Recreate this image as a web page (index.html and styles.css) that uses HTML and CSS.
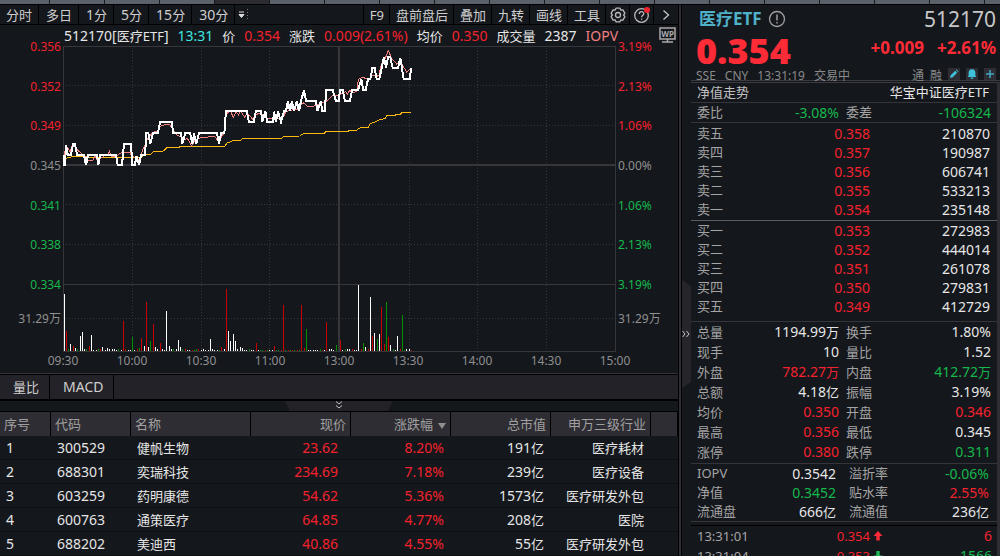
FILE: index.html
```html
<!DOCTYPE html>
<html lang="zh-CN">
<head>
<meta charset="utf-8">
<title>医疗ETF 512170</title>
<link rel="stylesheet" href="styles.css">
</head>
<body>
<div class="top-strip"></div>
<div class="workspace">
  <main class="main">
    <nav class="toolbar">
      <div class="group periods">
        <button>分时</button><button>多日</button><button><b>1</b>分</button><button><b>5</b>分</button><button><b>15</b>分</button><button><b>30</b>分</button>
        <button class="more" aria-label="更多周期"><svg width="12" height="14" viewBox="0 0 12 14"><path d="M1 4h5M1 6.500h5L3.500 9.500z" stroke="#ddd" fill="#ddd"/><path d="M9.500 1v12" stroke="#77777c" stroke-dasharray="1 2"/></svg></button>
      </div>
      <div class="group tools">
        <button>F9</button><button>盘前盘后</button><button>叠加</button><button>九转</button><button>画线</button><button>工具</button>
        <button class="icon" aria-label="设置"><svg width="16" height="16" viewBox="0 0 16 16" fill="none" stroke="#b9b9bb" stroke-width="1.300"><path d="M6 1.200h4l.8 1.900 2.100-.2 2 3.500-1.300 1.600 1.300 1.600-2 3.500-2.100-.2-.8 1.900H6l-.8-1.900-2.100.2-2-3.500L2.400 8 1.100 6.400l2-3.500 2.100.2z" stroke-linejoin="round"/><circle cx="8" cy="8" r="2.500"/></svg></button>
        <button class="icon" aria-label="帮助"><svg width="18" height="18" viewBox="0 0 18 18" fill="none" stroke="#b9b9bb" stroke-width="1.300"><circle cx="8.500" cy="9.500" r="6.800"/><path d="M6.300 8c0-3 4.500-3 4.500-.3 0 1.700-2.200 1.600-2.200 3.600M8.600 12.500v1.300"/><circle cx="14" cy="4" r="3" fill="#f5222d" stroke="none"/></svg></button>
        <button class="icon" aria-label="展开"><svg width="12" height="14" viewBox="0 0 12 14" fill="none" stroke="#c4c4c6" stroke-width="1.300"><path d="M3.500 2.500L8.500 7l-5 4.500"/></svg></button>
      </div>
    </nav>

    <section class="chart">
      <div class="readout">
        <span>512170[<small>医疗</small><small>ETF</small>]</span>
        <span class="cyan">13:31</span>
        <small>价</small><span class="up">0.354</span>
        <small>涨跌</small><span class="up">0.009(2.61%)</span>
        <small>均价</small><span class="up">0.350</span>
        <small>成交量</small><span>2387</span>
        <span class="pink">IOPV</span>
        <svg class="wp" width="17" height="17" viewBox="0 0 17 17" fill="none" stroke="#a9a9ab"><rect x="1" y="1" width="15" height="11" stroke-width="1.500"/><path d="M8.500 12v3M3 15h11" stroke-width="1.500"/><text x="8.500" y="9.500" text-anchor="middle" class="wp-text">WP</text></svg>
      </div>
      <div class="plot-row">
        <div class="axis left">
          <div class="scale"><span class="up">0.356</span><span class="up">0.352</span><span class="up">0.349</span><span>0.345</span><span class="down">0.341</span><span class="down">0.338</span><span class="down">0.334</span></div>
          <span class="vol">31.29万</span>
        </div>
        <svg class="plot" viewBox="189 138 1659 918" preserveAspectRatio="none" fill="none">
          <g class="grid dotted"><path d="M198 256.500H1845M198 376.500H1845M198 613.500H1845M198 733.500H1845M198 955.500H1845"/><path d="M397.500 144V1053M604.500 144V1053M808.500 144V1053M1228.500 144V1053M1432.500 144V1053M1639.500 144V1053"/></g>
          <g class="grid"><path d="M190.500 1056V139.500H1846.500V1054.500H190.500M189 853.500H1848"/><path d="M189 495H1848M1017 138V1056" stroke-width="6"/></g>
          <g class="bars" transform="translate(.5 570)">
            <path class="w" d="M193 483V312M211 483V462M226 483V474M241 483V438M247 483V426M253 483V477M274 483V435M280 483V480M289 483V480M307 483V471M316 483V480M322 483V474M328 483V477M337 483V477M343 483V477M349 483V480M364 483V480M385 483V480M391 483V480M403 483V480M433 483V468M445 483V471M466 483V471M472 483V477M487 483V477M493 483V480M499 483V363M508 483V468M514 483V477M529 483V477M535 483V450M541 483V471M562 483V480M568 483V480M604 483V480M610 483V477M616 483V480M625 483V480M631 483V447M637 483V477M643 483V480M652 483V480M673 483V477M685 483V423M691 483V453M700 483V432M706 483V453M712 483V477M721 483V471M727 483V474M733 483V480M739 483V480M754 483V480M760 483V480M775 483V480M808 483V480M817 483V480M925 483V480M931 483V480M940 483V480M946 483V480M952 483V480M973 483V480M988 483V477M994 483V477M1000 483V480M1027 483V480M1042 483V477M1048 483V477M1063 483V480M1069 483V480M1075 483V285M1096 483V471M1111 483V321M1123 483V429M1138 483V432M1171 483V465M1186 483V480M1192 483V438M1219 483V477M1228 483V477"/>
            <path class="r" d="M199 483V423M220 483V468M268 483V468M301 483V477M370 483V393M376 483V477M412 483V477M424 483V444M439 483V336M460 483V402M481 483V459M556 483V477M577 483V480M595 483V477M664 483V471M679 483V297M769 483V459M796 483V480M823 483V468M844 483V480M850 483V345M865 483V480M877 483V480M892 483V480M904 483V345M913 483V474M967 483V480M979 483V396M1021 483V450M1057 483V477M1084 483V477M1105 483V477M1117 483V438M1144 483V351M1153 483V462M1165 483V441M1201 483V477M1234 483V480"/>
            <path class="g" d="M205 483V477M232 483V477M259 483V477M295 483V477M355 483V477M397 483V441M418 483V474M451 483V453M520 483V477M547 483V477M583 483V480M589 483V477M658 483V480M748 483V477M781 483V480M787 483V480M802 483V480M829 483V480M835 483V480M856 483V480M871 483V480M883 483V480M898 483V480M919 483V417M961 483V477M1009 483V465M1036 483V477M1090 483V459M1132 483V447M1159 483V336M1180 483V477M1207 483V375M1213 483V480"/>
          </g>
          <polyline class="avg" points="189,474 201,474 216,470 261,470 262,472 423,472 435,465 453,463 460,454 490,453 500,444 537,442 540,439 675,439 681,429 700,422 723,420 727,415 846,415 850,409 900,408 904,403 918,400 972,400 978,394 1045,394 1047,391 1070,391 1075,386 1087,382 1106,382 1110,371 1126,366 1142,358 1155,356 1160,346 1185,346 1190,342 1202,342 1206,337 1233,337"/>
          <polyline class="iopv" points="192,470 198,435 210,455 219,429 232,450 240,456 252,468 258,472 262,482 280,480 285,468 291,480 310,470 315,462 325,465 328,453 333,468 345,470 350,468 360,460 372,456 390,456 395,470 408,472 417,480 423,470 427,450 436,435 443,415 451,405 462,396 474,392 482,378 500,372 510,375 520,390 530,405 543,410 550,420 562,415 575,438 585,420 597,415 605,411 620,413 628,408 645,410 655,425 663,415 668,405 674,395 678,345 690,330 700,352 708,335 716,345 722,333 734,352 742,340 758,357 765,348 775,340 790,345 800,355 830,357 850,350 858,335 875,330 893,328 905,312 912,308 920,318 935,320 950,315 965,310 980,303 1000,285 1016,287 1030,278 1038,275 1042,282 1050,270 1056,278 1070,275 1075,238 1088,232 1105,238 1120,225 1130,230 1137,225 1145,190 1156,175 1165,152 1175,175 1190,192 1202,185 1210,200 1220,216 1233,205"/>
          <polyline class="price" points="189,465 192,495 195,495 198,435 204,465 213,465 219,432 225,432 231,465 252,465 258,495 264,465 291,465 295,495 300,465 348,465 353,495 366,495 372,432 393,432 397,495 405,495 409,468 417,495 423,465 435,465 439,399 445,399 451,432 459,399 474,399 480,366 516,366 519,399 543,399 547,432 556,399 570,399 577,432 582,401 589,432 597,399 651,399 657,432 663,399 673,399 678,333 740,333 747,366 761,366 768,333 783,333 787,366 796,335 802,366 819,366 822,335 828,366 834,335 843,366 852,333 858,333 864,303 870,333 876,303 882,333 891,303 897,333 903,303 912,270 918,303 948,303 952,333 963,303 966,333 975,333 978,270 998,270 1008,303 1016,303 1020,271 1028,271 1035,303 1050,303 1056,270 1074,270 1084,238 1090,270 1097,270 1104,238 1111,238 1117,204 1124,204 1130,237 1138,237 1152,172 1158,204 1164,172 1171,172 1178,204 1194,204 1201,174 1211,237 1229,237 1234,204"/>
        </svg>
        <div class="axis right">
          <div class="scale"><span class="up">3.19%</span><span class="up">2.13%</span><span class="up">1.06%</span><span>0.00%</span><span class="down">1.06%</span><span class="down">2.13%</span><span class="down">3.19%</span></div>
          <span class="vol">31.29万</span>
        </div>
      </div>
      <div class="times"><span>09:30</span><span>10:00</span><span>10:30</span><span>11:00</span><span>13:00</span><span>13:30</span><span>14:00</span><span>14:30</span><span>15:00</span></div>
    </section>

    <div class="indicator-tabs"><button>量比</button><button class="latin">MACD</button></div>
    <div class="fold"><button aria-label="收起"><svg width="8" height="8" viewBox="0 0 8 8" fill="none" stroke="#c4c4c6"><path d="M1 .5l3 2.500 3-2.500M1 4.500L4 7l3-2.500"/></svg></button></div>

    <table class="stocks">
      <colgroup><col class="c-no"><col class="c-code"><col class="c-name"><col class="c-num"><col class="c-num"><col class="c-num"><col class="c-num"><col></colgroup>
      <thead><tr><th>序号</th><th>代码</th><th>名称</th><th class="num">现价</th><th class="num sorted">涨跌幅<i class="caret"></i></th><th class="num">总市值</th><th class="num">申万三级行业</th><th></th></tr></thead>
      <tbody>
        <tr><td>1</td><td>300529</td><td><small>健帆生物</small></td><td class="num price-cell up">23.62</td><td class="num up">8.20%</td><td class="num">191<small>亿</small></td><td class="num"><small>医疗耗材</small></td><td></td></tr>
        <tr><td>2</td><td>688301</td><td><small>奕瑞科技</small></td><td class="num price-cell up">234.69</td><td class="num up">7.18%</td><td class="num">239<small>亿</small></td><td class="num"><small>医疗设备</small></td><td></td></tr>
        <tr><td>3</td><td>603259</td><td><small>药明康德</small></td><td class="num price-cell up">54.62</td><td class="num up">5.36%</td><td class="num">1573<small>亿</small></td><td class="num"><small>医疗研发外包</small></td><td></td></tr>
        <tr><td>4</td><td>600763</td><td><small>通策医疗</small></td><td class="num price-cell up">64.85</td><td class="num up">4.77%</td><td class="num">208<small>亿</small></td><td class="num"><small>医院</small></td><td></td></tr>
        <tr><td>5</td><td>688202</td><td><small>美迪西</small></td><td class="num price-cell up">40.86</td><td class="num up">4.55%</td><td class="num">55<small>亿</small></td><td class="num"><small>医疗研发外包</small></td><td></td></tr>
      </tbody>
    </table>
  </main>

  <aside class="side">
    <div class="side-rail"><button aria-label="收起侧栏"><svg width="8" height="8" viewBox="0 0 8 8" fill="none" stroke="#c4c4c6"><path d="M.5 1L3 4 .5 7M4.500 1L7 4 4.500 7"/></svg></button></div>
    <div class="quote">
      <header class="head">
        <div class="title"><h1>医疗ETF</h1>
          <svg width="18" height="18" viewBox="0 0 18 18" fill="none" stroke="#a0a0a2" stroke-width="1.300"><circle cx="9" cy="9" r="7.500"/><path d="M9 4.500v6M9 12v1.500" stroke-width="1.500"/></svg>
          <span class="code">512170</span></div>
        <div class="last"><strong>0.354</strong><span>+0.009</span><span>+2.61%</span></div>
        <div class="meta"><span>SSE</span><span>CNY</span><span>13:31:19</span><span>交易中</span>
          <div class="badges"><span>通</span><span>融</span>
            <button aria-label="编辑"><svg width="12" height="12" viewBox="0 0 12 12" fill="#3fc1dc"><path d="M2 10l.7-2.700L7.200 2.800l2 2L4.700 9.300zM7.900 2.100l.7-.7 2 2-.7.7z"/></svg></button>
            <button aria-label="提醒"><svg width="12" height="12" viewBox="0 0 12 12" fill="#3fc1dc"><path d="M6 1.200c2.300 0 3.400 1.600 3.400 3.500v2.800l1 1.500H1.600l1-1.500V4.700C2.600 2.800 3.700 1.200 6 1.200zM4.700 9.500h2.600v1.300H4.700z"/></svg></button>
            <button aria-label="添加"><svg width="12" height="12" viewBox="0 0 12 12" stroke="#3fa9c4" stroke-width="1.500"><path d="M6 2v8M2 6h8"/></svg></button>
          </div></div>
      </header>
      <div class="details">
        <div class="line nav"><small>净值走势</small><small class="white">华宝中证医疗ETF</small></div>
        <dl class="stats line"><dt>委比</dt><dd class="down">-3.08%</dd><dt>委差</dt><dd class="down">-106324</dd></dl>
        <table class="depth asks">
          <tr><th>卖五</th><td class="up">0.358</td><td>210870</td></tr>
          <tr><th>卖四</th><td class="up">0.357</td><td>190987</td></tr>
          <tr><th>卖三</th><td class="up">0.356</td><td>606741</td></tr>
          <tr><th>卖二</th><td class="up">0.355</td><td>533213</td></tr>
          <tr><th>卖一</th><td class="up">0.354</td><td>235148</td></tr>
        </table>
        <table class="depth bids">
          <tr><th>买一</th><td class="up">0.353</td><td>272983</td></tr>
          <tr><th>买二</th><td class="up">0.352</td><td>444014</td></tr>
          <tr><th>买三</th><td class="up">0.351</td><td>261078</td></tr>
          <tr><th>买四</th><td class="up">0.350</td><td>279831</td></tr>
          <tr><th>买五</th><td class="up">0.349</td><td>412729</td></tr>
        </table>
        <dl class="stats totals">
          <dt>总量</dt><dd>1194.99<small>万</small></dd><dt>换手</dt><dd>1.80%</dd>
          <dt>现手</dt><dd>10</dd><dt>量比</dt><dd>1.52</dd>
          <dt>外盘</dt><dd class="up">782.27<small>万</small></dd><dt>内盘</dt><dd class="down">412.72<small>万</small></dd>
          <dt>总额</dt><dd>4.18<small>亿</small></dd><dt>振幅</dt><dd>3.19%</dd>
          <dt>均价</dt><dd class="up">0.350</dd><dt>开盘</dt><dd class="up">0.346</dd>
          <dt>最高</dt><dd class="up">0.356</dd><dt>最低</dt><dd>0.345</dd>
          <dt>涨停</dt><dd class="up">0.380</dd><dt>跌停</dt><dd class="down">0.311</dd>
        </dl>
        <dl class="stats fund">
          <dt>IOPV</dt><dd>0.3542</dd><dt>溢折率</dt><dd class="down">-0.06%</dd>
          <dt>净值</dt><dd class="down">0.3452</dd><dt>贴水率</dt><dd class="up">2.55%</dd>
          <dt>流通盘</dt><dd>666<small>亿</small></dd><dt>流通值</dt><dd>236<small>亿</small></dd>
        </dl>
        <table class="ticks">
          <tr><th>13:31:01</th><td class="up">0.354</td><td class="arrow"><svg width="10" height="10" viewBox="0 0 10 10" fill="#ff2b36"><path d="M5 0l4.500 5H6.700v4.500H3.300V5H.5z"/></svg></td><td class="up">6</td></tr>
          <tr><th>13:31:04</th><td class="up">0.353</td><td class="arrow"><svg width="10" height="10" viewBox="0 0 10 10" fill="#1db954"><path d="M5 9.500L.5 4.500h2.800V0h3.400v4.500h2.800z"/></svg></td><td class="down">1566</td></tr>
        </table>
      </div>
    </div>
  </aside>
</div>
</body>
</html>
```
FILE: styles.css
```css
* { box-sizing: border-box; }

body {
  margin: 0;
  height: 100vh;
  overflow: hidden;
  display: flex;
  flex-direction: column;
  background: #14171c;
  color: #e6e6e6;
  font: 14px/18px "Noto Sans", "Noto Sans CJK SC", sans-serif;
}

small { font-size: 13px; }
button { border: 0; margin: 0; padding: 0; background: none; color: inherit; font: inherit; }
svg { display: block; flex: none; }
dl, dd, h1 { margin: 0; }
table { border-collapse: separate; border-spacing: 0; width: 100%; }
th { font-weight: normal; text-align: left; }

.up { color: #f5222d; }
.down { color: #16b84c; }
.cyan { color: #3fe6e0; }
.pink { color: #f08080; }
.white { color: #e6e6e6; }

.top-strip {
  flex: none;
  height: 5px;
  border-bottom: 1px solid #000;
  background:
    linear-gradient(#2b2b31, #2b2b31) 215px 0 / 54px 4px no-repeat,
    repeating-linear-gradient(90deg, #5a616b 0 54px, #17191d 54px 55px) -5px 0;
}

.workspace { flex: 1; min-height: 0; display: flex; overflow: hidden; }
.main {
  flex: 1;
  min-width: 0;
  border-right: 1px solid #000;
  overflow: hidden;
}

/* toolbar */
.toolbar {
  display: flex;
  justify-content: space-between;
  height: 20px;
  border-bottom: 1px solid #000;
}
.group { display: flex; }
.group button {
  display: flex;
  align-items: center;
  justify-content: center;
  padding: 0 5px 0 6px;
  border-right: 1px solid #000;
  font-size: 13px;
  line-height: 18px;
  color: #cfcfcf;
  white-space: nowrap;
}
.group b { font-weight: normal; font-size: 14px; }
.periods button { padding: 0 6px 0 7px; }
.periods button:first-child { padding-left: 6px; }
.periods .more { padding: 0 3px; border-right: 0; }
.tools button:first-child { border-left: 1px solid #000; }
.tools .icon { width: 24px; padding: 0; }
.tools .icon:last-child { border-right: 0; }

/* intraday chart */
.chart { border-bottom: 1px solid #34343a; }
.readout {
  display: flex;
  gap: 9px;
  height: 21px;
  padding: 2px 2px 0 64px;
  white-space: nowrap;
}
.wp { margin-left: auto; }
.wp-text { font: bold 8px "Noto Sans", sans-serif; fill: #a9a9ab; stroke: none; }

.plot-row { display: flex; }
.axis {
  flex: none;
  width: 63px;
  margin-top: -8px;
  font-size: 12px;
  color: #8f8f8f;
}
.axis.left { padding-right: 2px; text-align: right; }
.axis.right { width: 62px; padding-left: 2px; }
.scale {
  display: flex;
  flex-direction: column;
  justify-content: space-between;
  height: 256px;
}
.vol { display: block; margin-top: 16px; }
.plot { flex: 1; min-width: 0; height: 306px; shape-rendering: crispEdges; }
.grid { stroke: #36363b; stroke-width: 3; }
.dotted { stroke-dasharray: 3 6; }
.bars { stroke-width: 3; }
.w { stroke: #fff; }
.r { stroke: #c80000; }
.g { stroke: #009000; }
.avg { stroke: #fdb913; stroke-width: 3; }
.iopv { stroke: #f08080; stroke-width: 3; }
.price { stroke: #fff; stroke-width: 6; }
.times {
  display: flex;
  justify-content: space-between;
  height: 21px;
  padding: 0 45px 0 45px;
  font-size: 12px;
  color: #8f8f8f;
}
.times span { width: 36px; text-align: center; }

.indicator-tabs {
  display: flex;
  height: 27px;
  border-top: 1px solid #000;
  border-bottom: 2px solid #000;
  background: #232228;
}
.indicator-tabs button {
  padding: 0 10px 0 13px;
  border-right: 1px solid #000;
  font-size: 13px;
  color: #cfcfcf;
}
.indicator-tabs .latin { font-size: 14px; }

.fold {
  display: flex;
  justify-content: center;
  height: 11px;
  border-bottom: 1px solid #000;
}
.fold button {
  display: flex;
  justify-content: center;
  width: 108px;
  background: #232228;
  clip-path: polygon(0 0, 100% 0, 103px 100%, 5px 100%);
}

/* constituents */
.stocks { table-layout: fixed; }
.c-no { width: 51px; }
.c-code { width: 80px; }
.c-name { width: 120px; }
.c-num { width: 100px; }
.stocks th {
  height: 24px;
  padding: 0 4px;
  background: #2e2d33;
  border-right: 1px solid #000;
  font-size: 13px;
  color: #a0a0a0;
}
.stocks td {
  height: 24px;
  padding: 1px 7px 0 6px;
  border-bottom: 1px solid #0e1014;
  white-space: nowrap;
}
.stocks .num { text-align: right; }
.stocks .price-cell { padding-right: 13px; }
.caret {
  display: inline-block;
  margin-left: 5px;
  vertical-align: middle;
  border: 4px solid transparent;
  border-top: 6px solid #8f8f8f;
  border-bottom: 0;
}

/* quote panel */
.side {
  flex: none;
  width: 321px;
  display: flex;
  border-left: 2px solid #2e2d33;
}
.side-rail { flex: none; width: 10px; border-left: 1px solid #000; }
.side-rail button {
  display: flex;
  align-items: center;
  width: 9px;
  height: 108px;
  margin-top: 275px;
  background: #26252b;
  clip-path: polygon(0 0, 100% 6px, 100% 102px, 0 100%);
}
.quote { flex: 1; min-width: 0; display: flex; flex-direction: column; }
.head {
  flex: none;
  height: 76px;
  padding: 0 4px 0 5px;
  border-bottom: 1px solid #3a3a40;
}
.title { display: flex; align-items: center; gap: 6px; height: 28px; }
.title h1 { font-size: 17px; padding-left: 3px; color: #4fb0c8; }
.code { margin-left: auto; font-size: 21px; color: #c8c8c8; }
.last {
  display: flex;
  gap: 13px;
  height: 35px;
  font-weight: bold;
  font-size: 17px;
  color: #ff2b36;
}
.last span { line-height: 30px; }
.last strong { margin-right: auto; font-size: 36px; line-height: 35px; }
.meta {
  display: flex;
  gap: 9px;
  height: 12px;
  font-size: 12px;
  line-height: 15px;
  color: #8a8a8a;
}
.badges { display: flex; gap: 6px; margin-left: auto; }
.badges button { width: 12px; height: 12px; background: #2e2d33; }

.details {
  flex: 1;
  min-height: 0;
  overflow: hidden;
  margin-top: 1px;
  border-top: 1px solid #3a3a40;
  border-right: 3px solid #2e2d33;
}
.line { border-bottom: 1px solid #34343a; }
.nav {
  display: flex;
  justify-content: space-between;
  height: 20px;
  padding: 0 8px 0 6px;
  color: #c0c0c0;
}
.stats {
  display: grid;
  grid-template-columns: 52px 90px 47px 1fr;
  grid-auto-rows: 20px;
  padding: 0 6px;
  border-bottom: 1px solid #34343a;
  line-height: 20px;
}
.stats.line { grid-auto-rows: 19px; line-height: 19px; }
.stats.totals { padding-bottom: 1px; }
.stats dt, .depth th { font-size: 13px; color: #a4a4a4; }
.stats dd { text-align: right; }
.stats dt:nth-of-type(even) { padding-left: 7px; }
.stats.fund {
  grid-template-columns: 52px 87px 58px 1fr;
  grid-auto-rows: 19px;
  padding-right: 8px;
  line-height: 19px;
}
.stats.fund dt:nth-of-type(even) { padding-left: 13px; }

.depth { padding: 1px 7px 1px 6px; border-bottom: 1px solid #5a5a60; }
.depth.bids { padding-top: 0; padding-bottom: 5px; border-bottom-color: #34343a; }
.depth th, .depth td { height: 19px; padding: 0; line-height: 19px; }
.depth th { width: 52px; }
.depth td { text-align: right; }
.depth td:nth-child(2) { width: 121px; }

.ticks { margin-top: 3px; border-top: 1px solid #000; font-size: 13px; }
.ticks th, .ticks td { height: 20px; padding: 0; line-height: 20px; }
.ticks th { width: 90px; padding-left: 6px; color: #a4a4a4; }
.ticks td { text-align: right; }
.ticks td:nth-child(2) { width: 89px; }
.ticks .arrow { width: 14px; padding-left: 3px; }
.ticks td:last-child { padding-right: 5px; font-size: 14px; }
```
